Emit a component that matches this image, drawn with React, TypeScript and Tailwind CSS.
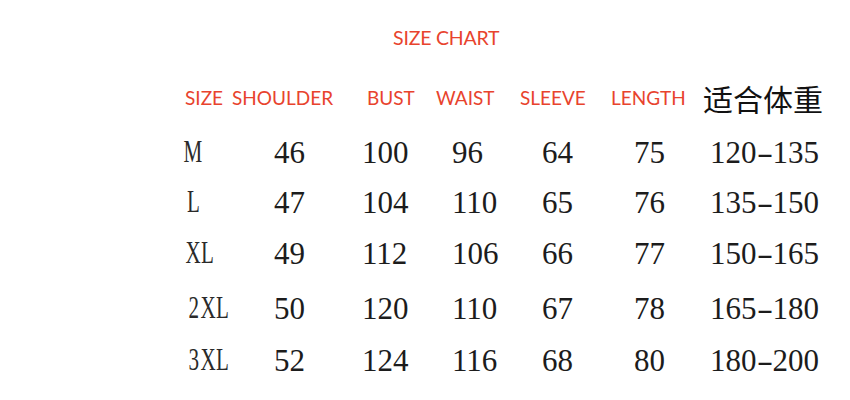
import React from "react";

const serif = "font-['Liberation_Serif','Times_New_Roman',serif]";
const futura = "font-['Lato','Noto_Sans',sans-serif]";

type Row = { size: string; h: string; cells: string[] };

const rows: Row[] = [
  { size: "M", h: "h-[50px]", cells: ["46", "100", "96", "64", "75", "120-135"] },
  { size: "L", h: "h-[50px]", cells: ["47", "104", "110", "65", "76", "135-150"] },
  { size: "XL", h: "h-[52px]", cells: ["49", "112", "106", "66", "77", "150-165"] },
  { size: "2XL", h: "h-[58px]", cells: ["50", "120", "110", "67", "78", "165-180"] },
  { size: "3XL", h: "h-[44px]", cells: ["52", "124", "116", "68", "80", "180-200"] },
];

// SimSun-style half-width latin: every letter sits in a 15px box
function NarrowLabel({ text }: { text: string }) {
  return (
    <span className="flex">
      {text.split("").map((ch, i) => (
        <span key={i} className="w-[14.5px] flex justify-center">
          <span className="inline-block scale-x-[0.68] text-[#2a2a2a]">{ch}</span>
        </span>
      ))}
    </span>
  );
}

// weight range, the dash is wide like in the original font
function Range({ value }: { value: string }) {
  const [a, b] = value.split("-");
  return (
    <span className="flex items-center leading-none">
      {a}
      <span className="inline-block w-[16px] text-center scale-x-[1.6]">-</span>
      {b}
    </span>
  );
}

export default function App() {
  return (
    <div className="w-[850px] h-[400px] bg-white overflow-hidden pt-[24px]">
      {/* Title */}
      <div className={`${futura} pl-[393px] h-[28px] leading-[28px] text-[19.5px] tracking-[-0.2px] text-[#e8432d]`}>
        SIZE CHART
      </div>

      {/* Header row */}
      <div className={`${futura} mt-[31px] flex items-center h-[30px] pl-[185px] text-[19px] text-[#e8432d]`}>
        <span className="w-[47px]">SIZE</span>
        <span className="w-[135px]">SHOULDER</span>
        <span className="w-[69px]">BUST</span>
        <span className="w-[84px]">WAIST</span>
        <span className="w-[91px]">SLEEVE</span>
        <span className="w-[92px]">LENGTH</span>
        <span className="font-['Noto_Sans_CJK_SC',sans-serif] text-[30px] text-[#111]">适合体重</span>
      </div>

      {/* Data rows */}
      <div className={`${serif} mt-[14px] pl-[186px] text-[31px] text-[#1c1c1c]`}>
        {rows.map((r) => (
          <div
            key={r.size}
            className={`grid grid-cols-[88px_88px_90px_90px_92px_76px_auto] items-center ${r.h}`}
          >
            <NarrowLabel text={r.size} />
            {r.cells.slice(0, 5).map((c, i) => (
              <span key={i} className="leading-none">
                {c}
              </span>
            ))}
            <Range value={r.cells[5]} />
          </div>
        ))}
      </div>
    </div>
  );
}
